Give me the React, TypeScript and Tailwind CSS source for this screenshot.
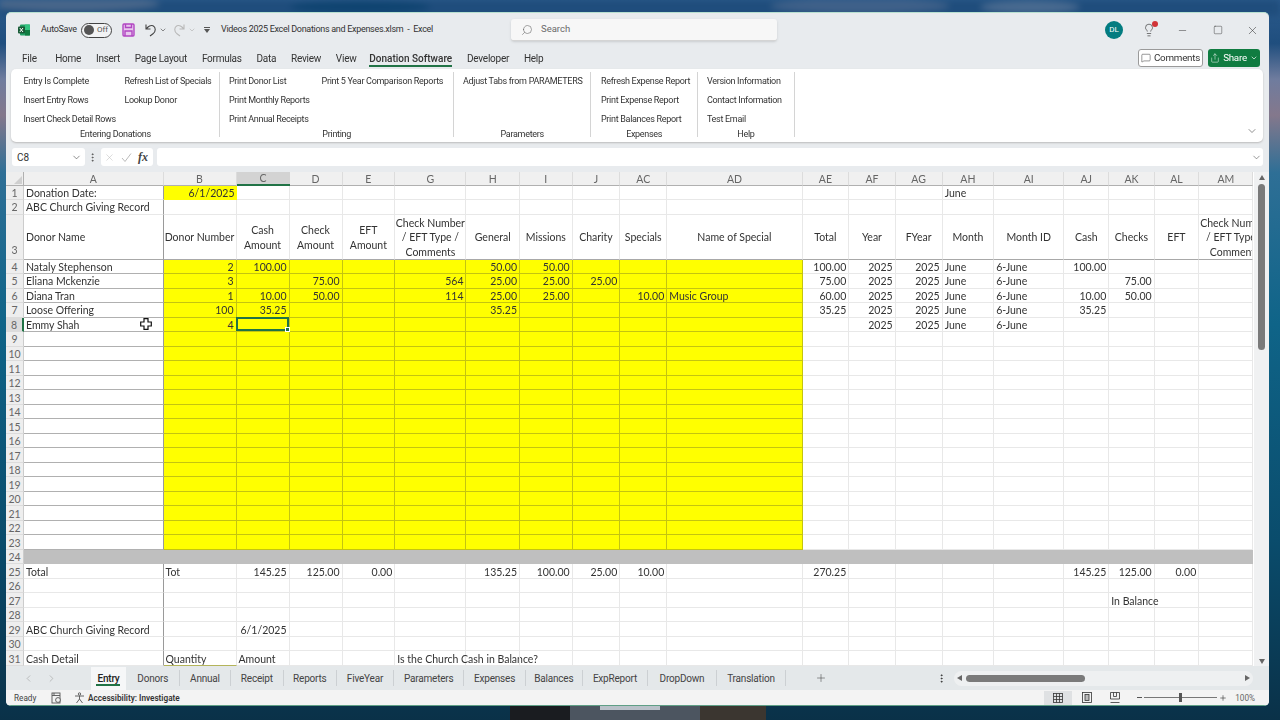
import React from "react";
import { Search, ChevronDown, Minus, Square, X, Lightbulb, MessageSquare, Share, ChevronLeft, ChevronRight, Plus, EllipsisVertical } from "lucide-react";

const cols = ["A","B","C","D","E","G","H","I","J","AC","AD","AE","AF","AG","AH","AI","AJ","AK","AL","AM"];
const rows = Array.from({ length: 31 }, (_, i) => i + 1);
const yr = { AF: "2025", AG: "2025", AH: "June", AI: "6-June" };
const data: Record<number, Record<string, string>> = {
  1: { A: "Donation Date:", B: "6/1/2025", AH: "June" },
  2: { A: "ABC Church Giving Record" },
  3: { A: "Donor Name", B: "Donor Number", C: "Cash Amount", D: "Check Amount", E: "EFT Amount", G: "Check Number / EFT Type / Comments", H: "General", I: "Missions", J: "Charity", AC: "Specials", AD: "Name of Special", AE: "Total", AF: "Year", AG: "FYear", AH: "Month", AI: "Month ID", AJ: "Cash", AK: "Checks", AL: "EFT", AM: "Check Number / EFT Type / Comments" },
  4: { A: "Nataly Stephenson", B: "2", C: "100.00", H: "50.00", I: "50.00", AE: "100.00", ...yr, AJ: "100.00" },
  5: { A: "Eliana Mckenzie", B: "3", D: "75.00", G: "564", H: "25.00", I: "25.00", J: "25.00", AE: "75.00", ...yr, AK: "75.00" },
  6: { A: "Diana Tran", B: "1", C: "10.00", D: "50.00", G: "114", H: "25.00", I: "25.00", AC: "10.00", AD: "Music Group", AE: "60.00", ...yr, AJ: "10.00", AK: "50.00" },
  7: { A: "Loose Offering", B: "100", C: "35.25", H: "35.25", AE: "35.25", ...yr, AJ: "35.25" },
  8: { A: "Emmy Shah", B: "4", ...yr },
  25: { A: "Total", B: "Tot", C: "145.25", D: "125.00", E: "0.00", H: "135.25", I: "100.00", J: "25.00", AC: "10.00", AE: "270.25", AJ: "145.25", AK: "125.00", AL: "0.00" },
  27: { AK: "In Balance" },
  29: { A: "ABC Church Giving Record", C: "6/1/2025" },
  31: { A: "Cash Detail", B: "Quantity", C: "Amount", G: "Is the Church Cash in Balance?" },
};
const leftCols = new Set(["A", "AD", "AH", "AI"]);
const yellowCols = new Set(["B","C","D","E","G","H","I","J","AC","AD"]);

function cellBorder(r: number, c: string) {
  if (r === 24) return "bg-[#bfbfbf]";
  if (r === 3) return c === "A" ? "border-b border-r border-b-[#a8a8a8] border-r-[#9a9a9a]" : "border-b border-r border-b-[#a8a8a8] border-r-[#e8e8e8]";
  if (r === 1 && c === "B") return "bg-[#ffff00]";
  if (r >= 4 && r <= 23 && yellowCols.has(c)) return "bg-[#ffff00] border-b border-r border-[#c4c410]";
  if (c === "A" && r >= 4 && r <= 23) return "border-b border-r border-b-[#b0b0b0] border-r-[#9a9a9a]";
  if (c === "A") return "border-b border-r border-b-[#e8e8e8] border-r-[#9a9a9a]";
  if (r === 31 && c === "B") return "border-b border-r border-b-[#b4b45a] border-r-[#e8e8e8]";
  return "border-b border-r border-[#e8e8e8]";
}

function Cell({ r, c }: { r: number; c: string }) {
  const t = data[r]?.[c];
  const isText = r === 31 || (r === 25 && c === "B") || r === 27;
  if (r === 3) {
    if (c === "A") return <div className={"flex items-center pl-[2px] pt-[2px] whitespace-nowrap " + cellBorder(r, c)}>{t}</div>;
    if (c === "AM")
      return (
        <div className={"overflow-hidden flex items-center pt-[2px] " + cellBorder(r, c)}>
          <div className="w-[71px] shrink-0 text-center leading-[14.5px]">{t}</div>
        </div>
      );
    return <div className={"flex items-center justify-center pt-[2px] text-center leading-[14.5px] " + cellBorder(r, c)}>{c === "G" ? <span className="w-[71px]">{t}</span> : c === "C" || c === "D" || c === "E" ? <span className="w-[42px]">{t}</span> : <span className="whitespace-nowrap">{t}</span>}</div>;
  }
  const left = leftCols.has(c) || isText;
  return (
    <div className={"relative flex items-center whitespace-nowrap pt-[3px] " + (left ? "pl-[2px] justify-start " : "pr-[2px] justify-end ") + cellBorder(r, c)}>
      {t}
      {r === 8 && c === "C" && (
        <div className="absolute -left-[1px] -top-[1px] right-0 bottom-0 border-2 border-[#217346]">
          <div className="absolute -right-[3px] -bottom-[3px] w-[5px] h-[5px] bg-[#217346] border border-white" />
        </div>
      )}
      {r === 8 && c === "A" && (
        <svg className="absolute left-[116px] top-0" width="12" height="12" viewBox="0 0 12 12">
          <path d="M4 .7h4v3.3h3.3v4H8v3.3H4V8H.7V4H4z" fill="#fff" stroke="#111" strokeWidth="1.2" />
        </svg>
      )}
    </div>
  );
}

function Sheet() {
  return (
    <div className="grid grid-cols-[18px_139.5px_73px_53px_53px_52.8px_71.2px_53.5px_52.7px_47.6px_47px_135.4px_46.6px_46.4px_47px_51.6px_70px_45px_45.4px_44.6px_54.2px] grid-rows-[13.5px_14.5px_14.5px_45px_repeat(28,14.53px)] w-[1247.5px] h-[494px] overflow-hidden bg-white text-[10.5px] text-[#333] font-['Lato',sans-serif]">
      <div className="bg-[#eeeeee] border-b border-r border-[#b0b0b0] relative">
        <div className="absolute right-[1px] bottom-[1px] w-0 h-0 border-l-[8px] border-l-transparent border-b-[8px] border-b-[#cfcfcf]" />
      </div>
      {cols.map((c) => (
        <div key={c} className={c === "C" ? "bg-[#d3d3d3] border-b-2 border-[#217346] flex items-center justify-center pt-[3px] text-[#666]" : "bg-[#f0f0f0] border-b border-r border-b-[#b0b0b0] border-r-[#dcdcdc] flex items-center justify-center pt-[3px] text-[#666]"}>
          {c}
        </div>
      ))}
      {rows.map((r) => (
        <React.Fragment key={r}>
          <div className={(r === 3 ? "items-end " : "items-center ") + (r === 8 ? "border-r-2 border-r-[#217346] bg-[#dcdcdc] " : "border-r border-r-[#cccccc] bg-[#eeeeee] ") + "flex justify-center pt-[3px] border-b border-b-[#dcdcdc] text-[#666]"}>
            {r}
          </div>
          {cols.map((c) => <Cell key={c} r={r} c={c} />)}
        </React.Fragment>
      ))}
    </div>
  );
}

const Item = ({ children }: { children: React.ReactNode }) => <div className="h-[19px] flex items-center whitespace-nowrap">{children}</div>;

function Group({ label, w, pl, columns }: { label: string; w: string; pl: string; columns: { cls: string; items: string[] }[] }) {
  return (
    <div className={"flex flex-col h-[65px] my-[3px] border-r border-[#d4d4d4] " + w}>
      <div className={"flex h-[57px] shrink-0 " + pl}>
        {columns.map((col, i) => (
          <div key={i} className={col.cls}>
            {col.items.map((t) => <Item key={t}>{t}</Item>)}
          </div>
        ))}
      </div>
      <div className="h-[10px] pt-[1px] shrink-0 flex items-center justify-center whitespace-nowrap">{label}</div>
    </div>
  );
}

const tabs = [
  ["File", "ml-[16px] mr-[3.7px]"], ["Home", ""], ["Insert", ""], ["Page Layout", ""], ["Formulas", ""], ["Data", ""], ["Review", ""], ["View", ""],
];
const sheets = [
  ["Donors", "w-[53.5px]"], ["Annual", "w-[51px]"], ["Receipt", "w-[52.7px]"], ["Reports", "w-[53.3px]"], ["FiveYear", "w-[57px]"], ["Parameters", "w-[70.5px]"], ["Expenses", "w-[61.2px]"], ["Balances", "w-[57.3px]"], ["ExpReport", "w-[65px]"], ["DropDown", "w-[69px]"], ["Translation", "w-[69px]"],
];

export default function App() {
  return (
    <div className="relative w-[1280px] h-[720px] overflow-hidden bg-[linear-gradient(180deg,#2c5b8c_0%,#1f4e7e_6%,#6f7c9e_11%,#84788c_16%,#2e6f96_24%,#0f6488_45%,#0a4c6c_75%,#0a3148_100%)] font-['Roboto',sans-serif] text-[#333]">
      <svg className="absolute left-0 top-0 blur-[3px]" width="1280" height="16" viewBox="0 0 1280 16">
        <rect width="1280" height="16" fill="#1f4d7c" />
        <ellipse cx="70" cy="4" rx="90" ry="7" fill="#5d7290" opacity=".7" />
        <ellipse cx="360" cy="7" rx="70" ry="6" fill="#0f4470" />
        <ellipse cx="860" cy="6" rx="90" ry="7" fill="#566f92" opacity=".6" />
        <ellipse cx="1030" cy="7" rx="50" ry="6" fill="#7f90a8" opacity=".45" />
      </svg>
      <svg className="absolute left-[510px] top-[704px]" width="256" height="16" viewBox="0 0 256 16">
        <rect width="256" height="16" fill="#1a1c20" />
        <rect x="60" width="130" height="16" fill="#4c5560" />
        <rect x="90" y="2" width="60" height="4" fill="#b9c1c9" />
        <rect x="190" width="66" height="16" fill="#3b3630" />
      </svg>
      <div className="relative ml-[6px] mt-[12px] w-[1263px] h-[694px] flex flex-col rounded-[5px] overflow-hidden bg-[#e8ebee] border-t border-[#b8e0d0] blur-[0.45px] text-[9px]">
        {/* title bar */}
        <div className="h-[31px] pt-[3px] flex items-center shrink-0">
          <svg className="ml-[12px] shrink-0" width="12" height="12" viewBox="0 0 12 12">
            <rect x="2" y="0.5" width="10" height="11" rx="1" fill="#21a366" />
            <rect x="7" y="0.5" width="5" height="5.5" fill="#33c481" />
            <rect x="7" y="6" width="5" height="5.5" fill="#107c41" />
            <rect x="0" y="2.5" width="7" height="7" rx="1" fill="#185c37" />
            <path d="M1.8 4l3.2 4M5 4L1.8 8" stroke="#fff" strokeWidth="1" />
          </svg>
          <span className="ml-[11px] w-[40px] whitespace-nowrap tracking-[-0.3px]">AutoSave</span>
          <div className="w-[31px] h-[15px] rounded-full border border-[#444] flex items-center pl-[2px] gap-[3px] text-[8px] text-[#555] bg-[#f2f3f4]">
            <div className="w-[10px] h-[10px] rounded-full bg-[#555] shrink-0" />Off
          </div>
          <svg className="ml-[10px] shrink-0" width="13" height="14" viewBox="0 0 13 14" fill="none" stroke="#b146c2" strokeWidth="1.4">
            <rect x="1" y="1" width="11" height="12" rx="1" fill="#e8c8ee" />
            <path d="M3.5 1v3.5h6V1M3 13V8h7v5" />
          </svg>
          <svg className="ml-[9px] shrink-0" width="13" height="14" viewBox="0 0 13 14" fill="none" stroke="#444" strokeWidth="1.1">
            <path d="M2 1.5v4.5h4.5M2.3 6C4 3 7 1.8 9 2.8c3 1.5 3 6 0 8l-3 2.2" />
          </svg>
          <ChevronDown className="ml-[2px] shrink-0 text-[#555]" size={8} />
          <svg className="ml-[6px] shrink-0" width="13" height="14" viewBox="0 0 13 14" fill="none" stroke="#b8b8b8" strokeWidth="1.1">
            <path d="M11 1.5v4.5H6.5M10.7 6C9 3 6 1.8 4 2.8c-3 1.5-3 6 0 8l3 2.2" />
          </svg>
          <ChevronDown className="ml-[2px] shrink-0 text-[#b5b5b5]" size={8} />
          <div className="ml-[8px] w-[6px] flex flex-col items-center gap-[1px] shrink-0">
            <div className="w-[6px] h-px bg-[#555]" />
            <div className="w-0 h-0 border-x-[3px] border-x-transparent border-t-[4px] border-t-[#555]" />
          </div>
          <span className="ml-[11px] w-[290px] whitespace-pre tracking-[-0.3px]">Videos 2025 Excel Donations and Expenses.xlsm  -  Excel</span>
          <div className="h-[22px] w-[266px] bg-[#f7f7f7] rounded-[3px] border-b border-[#d4d4d4] flex items-center pl-[10px] gap-[8px] text-[#6a6a6a] shadow-sm">
            <Search size={12} strokeWidth={1.2} className="-scale-x-100" />
            <span className="text-[9.5px]">Search</span>
          </div>
          <div className="ml-[328px] w-[18px] h-[18px] rounded-full bg-[#037c80] text-white text-[8px] flex items-center justify-center shrink-0">DL</div>
          <div className="relative ml-[19px] shrink-0">
            <Lightbulb size={14} strokeWidth={1.1} className="text-[#333]" />
            <div className="absolute -top-[2px] right-[-2px] w-[6px] h-[6px] rounded-full bg-[#d13438]" />
          </div>
          <Minus size={11} strokeWidth={1.1} className="ml-[21px] shrink-0" />
          <Square size={10} strokeWidth={1.1} className="ml-[25px] shrink-0" />
          <X size={13} strokeWidth={1} className="ml-[23px] shrink-0" />
        </div>
        {/* tabs */}
        <div className="h-[25px] pt-[3px] flex items-center shrink-0 text-[10px] tracking-[-0.25px] gap-[14.8px]">
          {tabs.map(([t, c]) => <span key={t} className={"whitespace-nowrap " + c}>{t}</span>)}
          <span className="relative -ml-[2px] h-[22px] flex items-center whitespace-nowrap font-medium tracking-normal">
            Donation Software
            <span className="absolute left-0 right-0 bottom-[2px] h-[2px] bg-[#217346]" />
          </span>
          <span>Developer</span>
          <span>Help</span>
          <div className="ml-auto flex gap-[5px] mr-[9px] items-center">
            <div className="w-[65px] h-[18px] bg-white border border-[#9a9a9a] rounded-[3px] flex items-center justify-center gap-[3px] text-[9.8px]">
              <MessageSquare size={10} strokeWidth={1.2} className="shrink-0" />Comments
            </div>
            <div className="w-[52px] h-[18px] bg-[#107c41] text-white rounded-[3px] flex items-center justify-center gap-[3px] text-[9.8px]">
              <Share size={10} strokeWidth={1.2} className="shrink-0" />Share<ChevronDown size={8} className="shrink-0" />
            </div>
          </div>
        </div>
        {/* ribbon */}
        <div className="relative ml-[5.4px] w-[1251.6px] h-[72.5px] shrink-0 bg-white rounded-[5px] flex shadow-[0_1px_2px_#bbb] text-[9px] tracking-[-0.3px]">
          <Group label="Entering Donations" w="w-[209px]" pl="pl-[12px]" columns={[{ cls: "w-[101px]", items: ["Entry Is Complete", "Insert Entry Rows", "Insert Check Detail Rows"] }, { cls: "", items: ["Refresh List of Specials", "Lookup Donor"] }]} />
          <Group label="Printing" w="w-[233.6px]" pl="pl-[8.6px]" columns={[{ cls: "w-[92.6px]", items: ["Print Donor List", "Print Monthly Reports", "Print Annual Receipts"] }, { cls: "", items: ["Print 5 Year Comparison Reports"] }]} />
          <Group label="Parameters" w="w-[137.4px]" pl="pl-[9px]" columns={[{ cls: "", items: ["Adjust Tabs from PARAMETERS"] }]} />
          <Group label="Expenses" w="w-[106.6px]" pl="pl-[9.6px]" columns={[{ cls: "", items: ["Refresh Expense Report", "Print Expense Report", "Print Balances Report"] }]} />
          <Group label="Help" w="w-[97px]" pl="pl-[9px]" columns={[{ cls: "", items: ["Version Information", "Contact Information", "Test Email"] }]} />
          <ChevronDown size={12} strokeWidth={1.2} className="absolute right-[5px] bottom-[5px] text-[#444]" />
        </div>
        {/* formula bar */}
        <div className="mt-[6.5px] h-[18px] flex items-center shrink-0 text-[10px]">
          <div className="ml-[6px] w-[73px] h-[18px] bg-white rounded-[3px] flex items-center pl-[5px] justify-between pr-[3px]">
            C8<ChevronDown size={11} strokeWidth={1.2} />
          </div>
          <EllipsisVertical size={11} className="ml-[1.5px] text-[#555]" />
          <div className="ml-[3.5px] w-[52px] h-[18px] bg-white rounded-[3px] flex items-center pl-[3px] gap-[6px] text-[#bbb]">
            <X size={11} strokeWidth={1.1} />
            <svg width="11" height="11" viewBox="0 0 11 11" fill="none" stroke="#bbb" strokeWidth="1"><path d="M1 6l3 3.5L10 1.5" /></svg>
            <span className="text-[#444] italic font-['Liberation_Serif',serif] font-bold text-[12px]">fx</span>
          </div>
          <div className="ml-[4px] w-[1106px] h-[18px] bg-white rounded-[3px] flex items-center justify-end pr-[1.5px]">
            <ChevronDown size={11} strokeWidth={1.2} className="text-[#444]" />
          </div>
        </div>
        {/* sheet */}
        <div className="mt-[6px] flex shrink-0">
          <Sheet />
          <div className="w-[15.5px] h-[494px] bg-[#f0f1f2] flex flex-col items-center pt-[2px]">
            <div className="w-0 h-0 border-x-[3.5px] border-x-transparent border-b-[5px] border-b-[#666] mt-[1px] ml-[1px]" />
            <div className="mt-[4px] ml-[1px] w-[7px] h-[166px] bg-[#7a7a7a] rounded-full" />
            <div className="mt-auto mb-[2px] ml-[1px] w-0 h-0 border-x-[3.5px] border-x-transparent border-t-[5px] border-t-[#666]" />
          </div>
        </div>
        {/* sheet tabs */}
        <div className="h-[23.5px] pt-[1px] flex items-center shrink-0 text-[10px] tracking-[-0.2px] text-[#444] bg-[#e4e8ea]">
          <ChevronLeft size={11} strokeWidth={1.2} className="ml-[17px] text-[#999]" />
          <ChevronRight size={11} strokeWidth={1.2} className="ml-[12px] text-[#999]" />
          <div className="ml-[33.6px] w-[35.9px] h-[22.5px] bg-[#f6f7f8] flex items-center justify-center relative font-medium text-[#222]">
            Entry
            <span className="absolute left-[5px] right-[6px] bottom-[4px] h-[1.5px] bg-[#217346]" />
          </div>
          {sheets.map(([t, w]) => (
            <div key={t} className={"h-[16px] border-r border-[#ccd0d3] flex items-center justify-center whitespace-nowrap " + w}>{t}</div>
          ))}
          <Plus size={12} strokeWidth={1.1} className="ml-[29px]" />
          <EllipsisVertical size={11} className="ml-[109px] text-[#333]" />
          <div className="ml-[7px] w-[299px] h-[15px] rounded-full bg-[#eef0f1] flex items-center relative">
            <div className="ml-[3px] w-0 h-0 border-y-[3.5px] border-y-transparent border-r-[5px] border-r-[#666]" />
            <div className="ml-[4.5px] w-[118.5px] h-[7px] rounded-full bg-[#7a7a7a]" />
            <div className="ml-auto mr-[3px] w-0 h-0 border-y-[3.5px] border-y-transparent border-l-[5px] border-l-[#666]" />
          </div>
        </div>
        {/* status */}
        <div className="flex-1 bg-[#f3f3f3] border-b border-[#5f9f86] pt-[1px] flex items-center text-[8.2px] text-[#444]">
          <span className="ml-[8px] w-[37px]">Ready</span>
          <svg width="11" height="12" viewBox="0 0 11 12" fill="none" stroke="#555" strokeWidth=".9"><rect x="1" y="1" width="8" height="10" /><path d="M1 3.5h8M3 1v2.5" /><circle cx="7" cy="8" r="2.4" fill="#f3f3f3" /></svg>
          <svg className="ml-[12px]" width="11" height="12" viewBox="0 0 11 12" fill="none" stroke="#555" strokeWidth=".9"><circle cx="5.5" cy="2" r="1.2" /><path d="M1 4h9M5.5 4v3M5.5 7L2.5 11M5.5 7l3 4" /></svg>
          <span className="ml-[3px] font-semibold text-[#333] whitespace-nowrap">Accessibility: Investigate</span>
          <div className="ml-auto w-[28px] h-[14px] bg-[#dfe1e3] flex items-center justify-center">
            <svg width="10" height="10" viewBox="0 0 10 10" fill="none" stroke="#333" strokeWidth=".8"><rect x=".5" y=".5" width="9" height="9" /><path d="M.5 3.5h9M.5 6.5h9M3.5.5v9M6.5.5v9" /></svg>
          </div>
          <svg className="ml-[10px]" width="10" height="11" viewBox="0 0 10 11" fill="none" stroke="#333" strokeWidth=".8"><rect x=".5" y=".5" width="9" height="10" /><rect x="3" y="2.5" width="4" height="6" fill="#bbb" /></svg>
          <svg className="ml-[18px]" width="10" height="11" viewBox="0 0 10 11" fill="none" stroke="#333" strokeWidth=".8"><path d="M.5 7V.5h9V7M.5 7h9M.5 10.5h9M3.5.5v4h3v-4" /></svg>
          <span className="ml-[17px] w-[5px] h-px bg-[#555]" />
          <div className="relative ml-[2px] w-[73px] h-px bg-[#777]">
            <div className="absolute left-[35px] -top-[4px] w-[3px] h-[9px] bg-[#555]" />
          </div>
          <Plus size={8} className="ml-[2px]" />
          <span className="ml-[8px] mr-[14px] whitespace-nowrap text-[#666]">100%</span>
        </div>
      </div>
    </div>
  );
}
